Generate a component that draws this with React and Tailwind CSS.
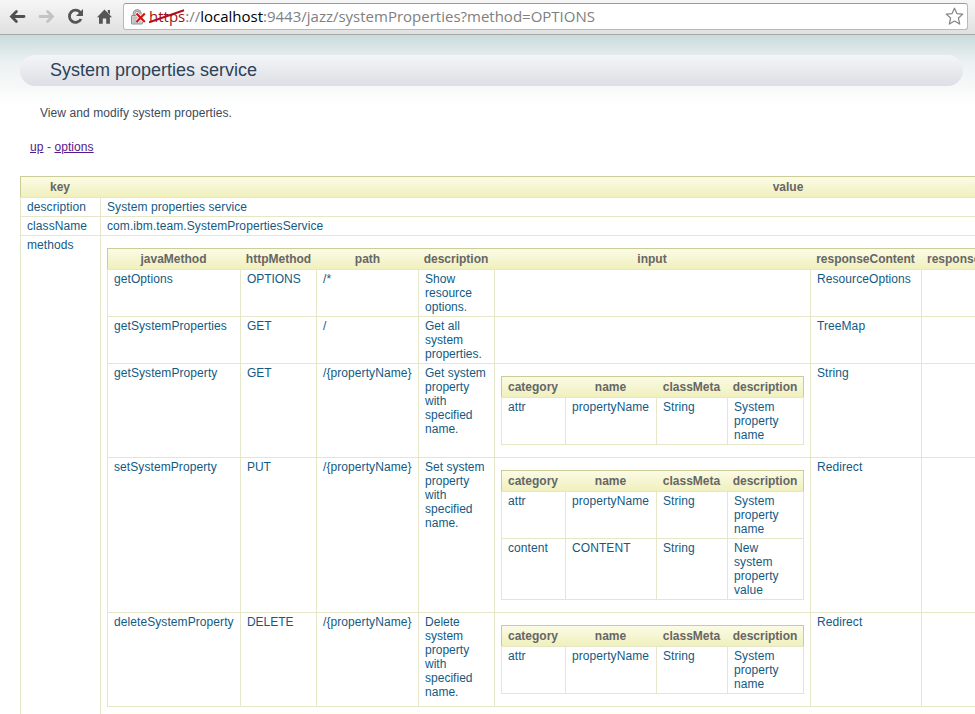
import React from "react";

const methods = [
  { name: "getOptions", http: "OPTIONS", path: "/*", desc: ["Show", "resource", "options."], response: "ResourceOptions", h: "h-[47px]" },
  { name: "getSystemProperties", http: "GET", path: "/", desc: ["Get all", "system", "properties."], response: "TreeMap", h: "h-[47px]" },
  {
    name: "getSystemProperty", http: "GET", path: "/{propertyName}",
    desc: ["Get system", "property", "with", "specified", "name."], response: "String", h: "h-[94px]",
    input: [["attr", "propertyName", "String", ["System", "property", "name"]]],
  },
  {
    name: "setSystemProperty", http: "PUT", path: "/{propertyName}",
    desc: ["Set system", "property", "with", "specified", "name."], response: "Redirect", h: "h-[155px]",
    input: [
      ["attr", "propertyName", "String", ["System", "property", "name"]],
      ["content", "CONTENT", "String", ["New", "system", "property", "value"]],
    ],
  },
  {
    name: "deleteSystemProperty", http: "DELETE", path: "/{propertyName}",
    desc: ["Delete", "system", "property", "with", "specified", "name."], response: "Redirect", h: "h-[93px]",
    input: [["attr", "propertyName", "String", ["System", "property", "name"]]],
  },
];

const headRow =
  "grid h-[21px] border-t border-l border-[#cccc99] bg-linear-to-b from-[#fbfbe6] to-[#f0f0bd] pt-[3px] text-center font-bold tracking-normal text-[#666] *:-ml-[2px]";
const outerCols = "grid-cols-[80px_1376px]";
const methodCols = "grid-cols-[133px_76px_102px_76px_316px_111px_110px_200px]";
const inputCols = "grid-cols-[64px_91px_71px_76px]";

function Cell({ children, className = "" }) {
  return <div className={`border-r border-[#e6e6c8] px-[6px] pt-[2px] whitespace-nowrap ${className}`}>{children}</div>;
}

function Lines({ items }) {
  return items.map((t) => <div key={t}>{t}</div>);
}

function InputTable({ rows }) {
  return (
    <div className="my-[10px] w-[303px]">
      <div className={`${headRow} ${inputCols} border-r`}>
        <div>category</div>
        <div>name</div>
        <div>classMeta</div>
        <div>description</div>
      </div>
      {rows.map(([category, name, meta, desc]) => (
        <div key={category} className={`grid border-t border-l border-[#e6e6c8] last:border-b ${inputCols}`}>
          <Cell>{category}</Cell>
          <Cell>{name}</Cell>
          <Cell>{meta}</Cell>
          <Cell>
            <Lines items={desc} />
            <div className="h-[2px]" />
          </Cell>
        </div>
      ))}
    </div>
  );
}

function MethodTable() {
  return (
    <div className="mt-[10px] w-[1125px]">
      <div className={`${headRow} ${methodCols}`}>
        <div>javaMethod</div>
        <div className="pl-px">httpMethod</div>
        <div className="pl-px">path</div>
        <div>description</div>
        <div>input</div>
        <div>responseContent</div>
        <div className="pl-[7px] text-left">responseStatus</div>
        <div>responseHeaders</div>
      </div>
      {methods.map((m) => (
        <div key={m.name} className={`grid border-t border-l border-[#e6e6c8] last:box-content last:border-b ${m.h} ${methodCols}`}>
          <Cell>{m.name}</Cell>
          <Cell className="tracking-[-0.05px]">{m.http}</Cell>
          <Cell>{m.path}</Cell>
          <Cell className="tracking-[0.02px]"><Lines items={m.desc} /></Cell>
          <Cell>{m.input && <InputTable rows={m.input} />}</Cell>
          <Cell>{m.response}</Cell>
          <Cell />
          <Cell />
        </div>
      ))}
    </div>
  );
}

function Toolbar() {
  return (
    <div className="flex h-[35px] items-start border-b border-[#a5a5a5] bg-linear-to-b from-[#f6f6f6] to-[#e0e0e0]">
      <svg width="123" height="34" viewBox="0 0 123 34" fill="none">
        <path d="M24 16.5H11.8M16.4 11.6L11.5 16.5L16.4 21.4" stroke="#505050" strokeWidth="2.8" strokeLinecap="round" />
        <path d="M40 16.5H52.2M47.6 11.6L52.5 16.5L47.6 21.4" stroke="#c3c3c3" strokeWidth="2.8" strokeLinecap="round" />
        <path d="M80.4 12.6A6.1 6.1 0 1 0 81 19" stroke="#555" strokeWidth="2.8" />
        <path d="M83 9V16H76Z" fill="#555" />
        <path d="M104.5 9.4L112 17.3H109.9V23.8H106.2V18.5H102.8V23.8H99V17.3H97Z" fill="#555" />
        <path d="M107.8 10H110V14.5L107.8 12.4Z" fill="#555" />
      </svg>
      <div className="mt-[3px] flex h-[27px] w-[845px] items-center rounded-[3px] border border-[#b9b9b9] border-t-[#9b9b9b] bg-white pr-[3px] pl-[6px]">
        <svg width="19" height="20" viewBox="0 0 19 20" fill="none" className="shrink-0">
          <path d="M4 9V6.8A3.2 3.2 0 0 1 10.4 6.8V9" stroke="#8c8c8c" strokeWidth="2.6" />
          <path d="M4 9V6.8A3.2 3.2 0 0 1 10.4 6.8V9" stroke="#e2e2e2" strokeWidth="0.8" />
          <rect x="1.5" y="8.5" width="11" height="8.5" rx="0.5" fill="#cfcfcf" stroke="#909090" />
          <path d="M3 11H11M3 13H11M3 15H11" stroke="#b0b0b0" strokeWidth="0.8" />
          <path d="M7 7L14.5 14.5M14.5 7L7 14.5" stroke="#fff" strokeWidth="3.6" />
          <path d="M6.5 6.5L14.8 15M14.8 6.5L6.5 15" stroke="#cf1717" strokeWidth="2.2" />
        </svg>
        <div className="flex-1 font-['Open_Sans','Noto_Sans',sans-serif] text-[15px] leading-[25px] tracking-normal whitespace-nowrap text-[#808080]">
          <span className="relative inline-block text-[#a0101c]">
            https
            <svg className="absolute top-0 left-0" width="36" height="25" viewBox="0 0 36 25">
              <path d="M0 18.3L35 6.3" stroke="#b00d17" strokeWidth="2" />
            </svg>
          </span>
          ://<span className="text-black">localhost</span>:9443/jazz/systemProperties?method=OPTIONS
        </div>
        <svg width="19" height="19" viewBox="0 0 19 19" fill="none" className="shrink-0">
          <path d="M9.5 1.2L11.9 6.6L17.8 7.1L13.4 11L14.7 17.1L9.5 14L4.3 17.1L5.6 11L1.2 7.1L7.1 6.6Z" stroke="#858585" strokeWidth="1.2" strokeLinejoin="round" />
        </svg>
      </div>
    </div>
  );
}

export default function App() {
  return (
    <div className="h-[714px] w-[975px] overflow-hidden bg-white font-['Liberation_Sans',Arial,sans-serif] text-[12px] leading-[14px] tracking-[0.08px] text-[#135a82]">
      <Toolbar />
      <div className="h-[679px] bg-linear-to-b from-[#c9dbdb] from-0% via-[#ebf0f0] via-[26px] to-white to-[70px] pt-[20px] pl-[20px]">
        <h1 className="h-[31px] w-[943px] rounded-full bg-linear-to-b from-[#f5f5f6] to-[#dcdfe6] pl-[30px] text-[18px] leading-[30px] tracking-normal text-[#2b4257]">
          System properties service
        </h1>
        <p className="mt-[20px] ml-[20px] text-[#3c4a58]">View and modify system properties.</p>
        <p className="mt-[20px] ml-[10px] text-[#3c4a58]">
          <a className="text-[#551a8b] underline">up</a> - <a className="text-[#551a8b] underline">options</a>
        </p>
        <div className="mt-[22px] w-[1457px]">
          <div className={`${headRow} ${outerCols}`}>
            <div>key</div>
            <div>value</div>
          </div>
          <div className={`grid h-[19px] border-t border-l border-[#e6e6c8] ${outerCols}`}>
            <Cell>description</Cell>
            <Cell>System properties service</Cell>
          </div>
          <div className={`grid h-[19px] border-t border-l border-[#e6e6c8] ${outerCols}`}>
            <Cell>className</Cell>
            <Cell>com.ibm.team.SystemPropertiesService</Cell>
          </div>
          <div className={`grid h-[500px] border-t border-l border-[#e6e6c8] ${outerCols}`}>
            <Cell>methods</Cell>
            <Cell><MethodTable /></Cell>
          </div>
        </div>
      </div>
    </div>
  );
}
